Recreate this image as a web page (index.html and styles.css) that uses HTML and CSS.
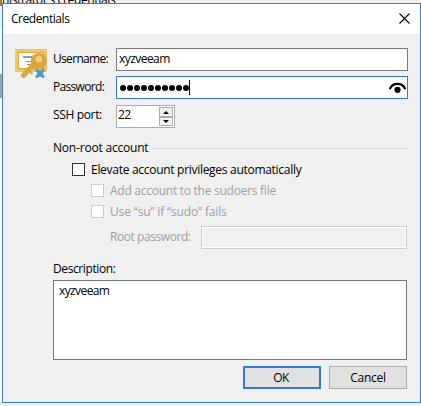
FILE: index.html
```html
<!DOCTYPE html>
<html lang="en">
<head>
<meta charset="utf-8">
<title>Credentials</title>
<link rel="stylesheet" href="styles.css">
</head>
<body>
<div class="backdrop"><span class="backdrop-mark"></span><span class="backdrop-text">nistrator's credentials</span><span class="backdrop-row"></span></div>
<main class="dialog">
  <header class="titlebar">
    <span class="title">Credentials</span>
    <svg class="close" width="11" height="11" viewBox="0 0 11 11"><path d="M.5.5l10 10M10.5.5l-10 10" fill="none" stroke="#000" stroke-width="1.1"/></svg>
  </header>
  <div class="content">
    <svg class="icon" width="32" height="30" viewBox="0 0 32 30">
      <rect x="1" y="1" width="30" height="21" fill="#fff" stroke="#ebc671" stroke-width="2"/>
      <rect x="3.500" y="3.500" width="25" height="16" fill="none" stroke="#dba83f"/>
      <path d="M2.500 2.500h27v18h-27z" fill="none" stroke="#ebc671"/>
      <path d="M8 8h9" stroke="#777" stroke-width="1.500"/>
      <path d="M11 12.500h5M12 15.500h3" stroke="#888"/>
      <path d="M19.500 14.500L8.500 26.500" stroke="#d9a640" stroke-width="5" stroke-linecap="round"/>
      <path d="M15 22.500l2.500 2.500" stroke="#d9a640" stroke-width="2"/>
      <circle cx="23.800" cy="12" r="8" fill="#d9a640"/>
      <circle cx="23.800" cy="10.300" r="3.200" fill="#efcf85"/>
      <path d="M21 20.500l8 8M29 20.500l-8 8" stroke="#5796ca" stroke-width="2.800"/>
      <circle cx="25" cy="24.500" r="3.200" fill="#5796ca"/>
    </svg>
    <section class="form">
      <label class="row"><span class="label">Username:</span><span class="input">xyzveeam</span></label>
      <label class="row"><span class="label">Password:</span><span class="input focused"><span class="dots"><i></i><i></i><i></i><i></i><i></i><i></i><i></i><i></i><i></i><i></i></span><span class="caret"></span>
        <svg class="eye" width="17" height="12" viewBox="0 0 17 12"><path d="M.8 7.200C3.500 .2 13.500 .2 16.200 7.200" fill="none" stroke="#000" stroke-width="2.200"/><circle cx="8.500" cy="7.800" r="3.100"/></svg></span></label>
      <label class="row"><span class="label port">SSH port:</span><span class="input spinner"><span class="number">22</span><span class="steps"><b class="up"></b><b class="down"></b></span></span></label>
      <div class="group"><span class="grouptitle">Non-root account</span><span class="rule"></span></div>
      <label class="check"><span class="box"></span><span class="elevate">Elevate account privileges automatically</span></label>
      <label class="check sub"><span class="box"></span><span class="sudoers">Add account to the sudoers file</span></label>
      <label class="check sub"><span class="box"></span><span class="su">Use “su” if “sudo” fails</span></label>
      <label class="root"><span class="rootlabel">Root password:</span><span class="rootinput"></span></label>
      <div class="desc">Description:</div>
      <div class="area">xyzveeam</div>
      <footer class="buttons"><span class="button primary">OK</span><span class="button">Cancel</span></footer>
    </section>
  </div>
</main>
</body>
</html>
```

FILE: styles.css
```css
* { box-sizing: border-box; }
body { margin: 0; width: 421px; height: 406px; overflow: hidden; position: relative; background: #f0f0f0; color: #000; font: 12px/16px "Open Sans", "Noto Sans", sans-serif; white-space: nowrap; }
svg { display: block; flex: none; }
.backdrop { position: absolute; left: 0; top: 0; width: 421px; height: 406px; }
.backdrop::before { content: ""; position: absolute; left: 0; top: 30px; width: 2px; height: 373px; background: #fff; }
.backdrop-mark { position: absolute; left: 0; top: 0; width: 2px; height: 6px; background: #b8722c; }
.backdrop-text { position: absolute; left: 2px; top: -8px; letter-spacing: -.35px; }
.backdrop-row { position: absolute; left: 0; top: 74px; width: 2px; height: 24px; background: #a0a0a0; }
.dialog { position: relative; margin: 3px 0 0 2px; width: 419px; height: 400px; border: 1px solid #3b7fd4; background: #f0f0f0; }
.titlebar { height: 30px; padding: 0 10px 0 8px; background: #fff; display: flex; align-items: center; justify-content: space-between; }
.title { letter-spacing: -.45px; }
.close { margin-top: -1px; }
.content { display: flex; gap: 6px; padding: 14px 12px 0 12px; }
.icon { margin-top: 1px; }
.form { flex: 1; width: 354px; }
.row { display: flex; height: 23px; align-items: center; margin-bottom: 5px; }
.row + .row + .row { margin-top: 6px; }
.label { width: 63px; flex: none; letter-spacing: -.68px; padding-bottom: 2px; }
.port { letter-spacing: -.35px; padding-bottom: 3px; }
.input { display: flex; align-items: center; width: 292px; height: 23px; border: 1px solid #7a7a7a; background: #fff; padding: 0 2px 1px; letter-spacing: -.55px; }
.focused { border-color: #3876d6; padding: 0 1px 0 3px; }
.dots { display: flex; gap: 1px; }
.dots i { width: 6px; height: 6px; border-radius: 50%; background: #000; }
.caret { width: 1px; height: 15px; background: #000; margin-bottom: 1px; }
.eye { margin-left: auto; }
.spinner { width: 59px; border-color: #aaadb3; justify-content: space-between; padding: 0 1px; letter-spacing: -.5px; }
.number { padding-bottom: 3px; }
.steps { display: flex; flex-direction: column; width: 14px; }
.steps b { height: 10px; border: 1px solid #acacac; background: #f0f0f0; display: flex; align-items: center; justify-content: center; }
.steps b + b { height: 9px; }
.steps b::after { content: ""; border: 3px solid transparent; }
.up::after { border-top: 0 !important; border-bottom-color: #000 !important; }
.down::after { border-bottom: 0 !important; border-top-color: #000 !important; }
.group { display: flex; align-items: center; height: 16px; gap: 4px; margin-top: 12px; width: 355px; }
.grouptitle { letter-spacing: -.2px; }
.rule { flex: 1; height: 1px; background: #dcdcdc; }
.check { display: flex; align-items: center; gap: 6px; height: 21px; margin-left: 19px; }
.group + .check { margin-top: 3px; }
.box { width: 13px; height: 13px; border: 1px solid #333; background: #fff; }
.elevate { letter-spacing: -.29px; }
.sudoers { letter-spacing: -.26px; }
.su { letter-spacing: -.17px; }
.sub { margin-left: 38px; color: #a0a0a0; }
.sub .box { border-color: #ccc; }
.root { display: flex; align-items: center; height: 23px; margin: 4px 0 0 57px; color: #a0a0a0; }
.rootlabel { width: 91px; letter-spacing: -.43px; padding-bottom: 1px; }
.rootinput { width: 206px; height: 23px; border: 1px solid #ccc; box-shadow: inset 0 0 0 1px #fff; }
.desc { margin-top: 11px; height: 20px; line-height: 18px; letter-spacing: -.4px; }
.area { width: 354px; height: 80px; border: 1px solid #7a7a7a; background: #fff; padding: 2px 5px; letter-spacing: -.6px; }
.buttons { display: flex; width: 354px; gap: 8px; justify-content: flex-end; margin-top: 6px; }
.button { width: 78px; height: 23px; border: 1px solid #adadad; background: #e1e1e1; display: flex; align-items: center; justify-content: center; letter-spacing: -.25px; }
.primary { border: 2px solid #3876d6; letter-spacing: -.5px; padding-right: 2px; }
```
